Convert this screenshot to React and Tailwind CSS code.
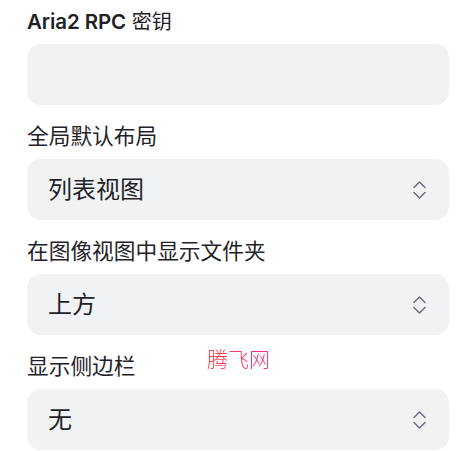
import React from "react";

function Chevrons() {
  return (
    <svg width="13" height="20" viewBox="0 0 13 20" fill="none" stroke="#6b7280" strokeWidth="1.6" strokeLinecap="round" strokeLinejoin="round">
      <path d="M1 7.5 L6.5 2 L12 7.5" />
      <path d="M1 12.5 L6.5 18 L12 12.5" />
    </svg>
  );
}

function Field({ label, value, select }) {
  return (
    <div className="flex flex-col gap-[7px]">
      <div className="h-8 leading-8 text-[21.7px] text-[#1f2328] whitespace-nowrap">{label}</div>
      <div className="h-[61px] rounded-[14px] bg-[#f1f2f4] flex items-center justify-between pl-[21px] pr-[23px]">
        <span className="text-[24px] text-[#1f2328]">{value}</span>
        {select && <Chevrons />}
      </div>
    </div>
  );
}

export default function App() {
  return (
    <div className="relative w-[462px] h-[451px] overflow-hidden bg-white font-['Inter','Noto_Sans_CJK_SC',sans-serif]">
      <div className="flex flex-col gap-[15px] pt-[5px] pl-[27px] pr-[13px]">
        <Field
          label={
            <>
              <span className="font-semibold text-[20.5px] tracking-[-0.1px]">Aria2 RPC</span>
              <span className="text-[20px]"> 密钥</span>
            </>
          }
          value=""
        />
        <Field label="全局默认布局" value="列表视图" select />
        <Field label="在图像视图中显示文件夹" value="上方" select />
        <Field label="显示侧边栏" value="无" select />
      </div>
      <div className="absolute left-[207px] top-[343px] text-[21px] leading-[30px] font-['Noto_Sans_CJK_SC',serif] font-light bg-gradient-to-r from-[#ff3b3b] to-[#ff2a8c] bg-clip-text text-transparent">
        腾飞网
      </div>
    </div>
  );
}
